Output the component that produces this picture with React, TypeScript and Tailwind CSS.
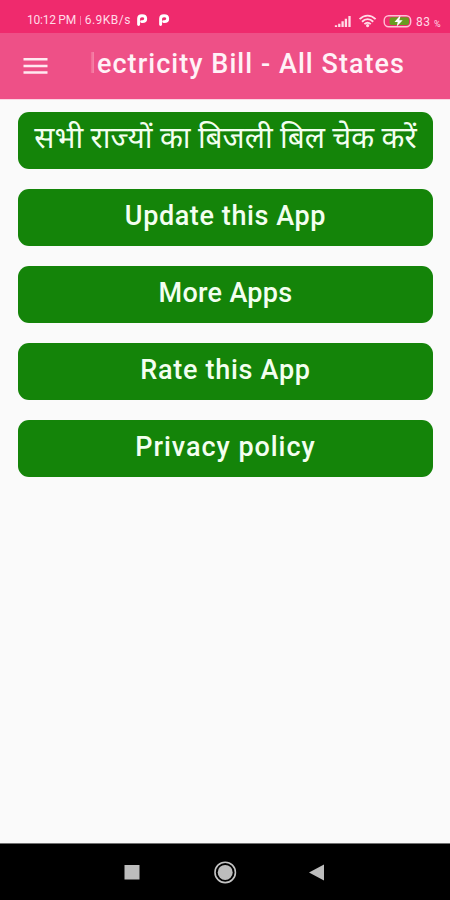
import clsx from "clsx";

interface MenuButton {
  label: string;
  textClass: string;
}

const buttons: MenuButton[] = [
  {
    label: "सभी राज्यों का बिजली बिल चेक करें",
    textClass: "text-[29.8px] tracking-normal pb-[5px]",
  },
  { label: "Update this App", textClass: "text-[27px] font-medium tracking-[0.6px] pb-[3px]" },
  { label: "More Apps", textClass: "text-[27px] font-medium tracking-[0.3px] pb-[3px]" },
  { label: "Rate this App", textClass: "text-[27px] font-medium tracking-[0.7px] pb-[3px]" },
  { label: "Privacy policy", textClass: "text-[27px] font-medium tracking-[0.95px] pb-[3px]" },
];

const NotificationIcon = () => (
  <svg width="12" height="14" viewBox="0 0 12 14" fill="none">
    <path
      d="M2.6 11.6V5.8C2.6 3.8 4 2.8 6 2.8S9.7 3.9 9.7 5.7 8.3 8.6 6.4 8.6H5.6"
      stroke="white"
      strokeWidth="2.9"
      strokeLinecap="round"
    />
  </svg>
);

const StatusBar = () => (
  <div className="flex h-[33px] items-start bg-[#ef2a6d] pt-[13px] pl-[27px] text-[#ffdbe7]">
    <div className="flex h-[14px] w-[104px] items-center justify-between whitespace-nowrap text-[12px] leading-[14px]">
      <span className="tracking-[-0.25px]">10:12 PM</span>
      <span className="h-[9px] w-px bg-[#f67da7]" />
      <span className="tracking-[0.5px]">6.9KB/s</span>
    </div>
    <div className="ml-[5px] flex gap-[10px]">
      <NotificationIcon />
      <NotificationIcon />
    </div>
    <svg
      className="ml-auto mr-[4px]"
      width="112"
      height="17"
      viewBox="0 0 112 17"
      fill="none"
    >
      <path
        d="M2 12.3v1.7M5.3 10.8v3.2M8.6 8.3V14M11.9 5.8V14M15.5 3V14"
        stroke="#ffdbe7"
        strokeWidth="2.3"
      />
      <g stroke="#ffdbe7" strokeWidth="1.9">
        <path d="M25.6 6.1c4.8-4.7 11.2-4.7 16 0" />
        <path d="M28 8.7c3.4-3.2 7.8-3.2 11.2 0" />
        <path d="M30.4 11.1c2-1.8 4.4-1.8 6.4 0" />
      </g>
      <circle cx="33.6" cy="12.6" r="1.6" fill="#ffdbe7" />
      <rect x="50.2" y="2.7" width="26.5" height="11" rx="4.5" stroke="#ffc0d5" strokeWidth="1.4" />
      <rect x="55.5" y="4.3" width="19.5" height="7.8" rx="2" fill="#6a9a20" />
      <path d="M65.5 3.2L60.5 9h3.2l-1 4.5 6-6.2h-3.4l1.2-4z" fill="white" />
      <text x="82" y="12.5" className="text-[12px]" fill="#ffdbe7" letterSpacing="0.4">
        83
      </text>
      <text x="100" y="14" className="text-[9px]" fill="#ffdbe7">
        %
      </text>
    </svg>
  </div>
);

const Header = () => (
  <header className="flex h-[66px] items-center bg-[#ee5087]">
    <svg className="ml-[23px]" width="25" height="18" viewBox="0 0 25 18">
      <path d="M0.5 2.3h24M0.5 9h24M0.5 15.6h24" stroke="#ffe9f1" strokeWidth="2.5" />
    </svg>
    <h1 className="ml-[41px] whitespace-nowrap pb-[4px] text-[27px] leading-8 font-medium tracking-[1.05px] text-[#fff2f7]">
      <span className="bg-linear-to-r from-[#ee5087] to-[#f8a2c0] bg-clip-text text-transparent">
        l
      </span>
      ectricity Bill - All States
    </h1>
  </header>
);

const NavigationBar = () => (
  <nav className="flex h-[57px] items-center justify-center border-t border-[#707070] bg-black">
    <svg width="202" height="24" viewBox="0 0 202 24" fill="none">
      <rect x="0.5" y="5" width="15" height="14.5" fill="#bdbdbd" />
      <circle cx="101.2" cy="12.4" r="10.2" stroke="#c4c4c4" strokeWidth="1.6" />
      <circle cx="101.2" cy="12.4" r="7.5" fill="#bdbdbd" />
      <path d="M200 4.5v16l-15-8z" fill="#bdbdbd" />
    </svg>
  </nav>
);

const App = () => {
  return (
    <div className="flex h-[900px] w-[450px] flex-col overflow-hidden bg-[#fafafa] font-['Roboto','Noto_Sans',sans-serif]">
      <StatusBar />
      <Header />
      <main className="flex flex-1 flex-col gap-[20px] border-t border-[#fcd5e3] px-[18px] pt-[12px] pr-[17px]">
        {buttons.map((button) => (
          <button
            key={button.label}
            className={clsx(
              "flex h-[57px] items-center justify-center whitespace-nowrap rounded-[11px] bg-[#148409] text-[#f3fff0]",
              button.textClass
            )}
          >
            {button.label}
          </button>
        ))}
      </main>
      <NavigationBar />
    </div>
  );
};

export default App;
